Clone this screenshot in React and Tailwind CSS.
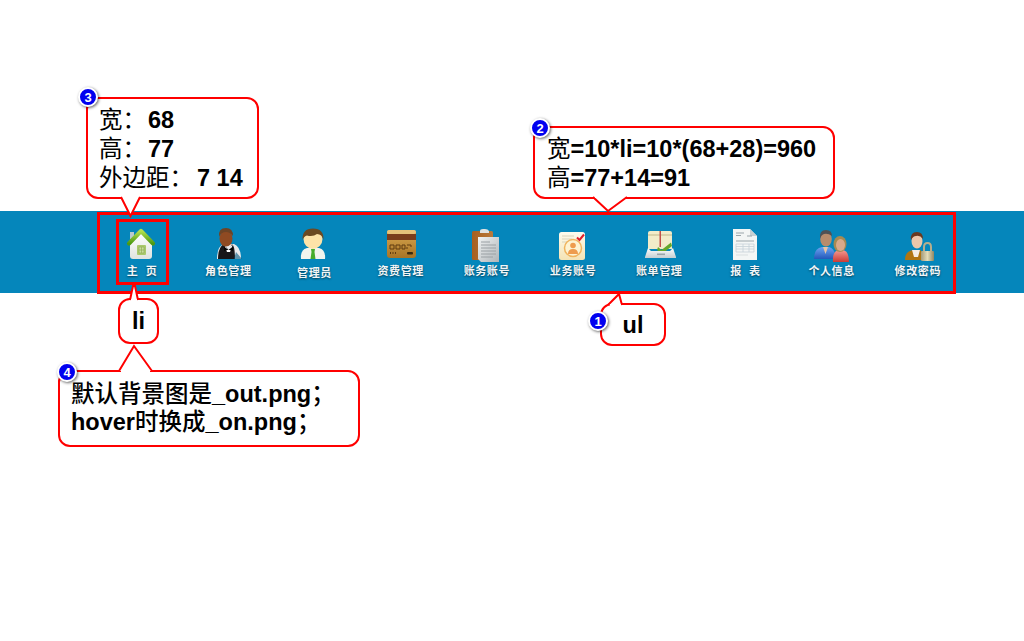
const navItems = [
  { label: "主  页", icon: HomeIcon },
  { label: "角色管理", icon: WaiterIcon },
  { label: "管理员", icon: ManagerIcon, low: true },
  { label: "资费管理", icon: CardIcon },
  { label: "账务账号", icon: ClipboardIcon },
  { label: "业务账号", icon: ProfileIcon },
  { label: "账单管理", icon: TrayIcon },
  { label: "报  表", icon: ReportIcon },
  { label: "个人信息", icon: UsersIcon },
  { label: "修改密码", icon: LockIcon },
];

function Svg({ children }) {
  return (
    <svg width="40" height="36" viewBox="0 0 40 36" className="block">
      {children}
    </svg>
  );
}

function HomeIcon() {
  return (
    <Svg>
      <defs>
        <linearGradient id="homeRoof" x1="0" y1="0" x2="0" y2="1">
          <stop offset="0" stopColor="#b4e04e" />
          <stop offset="1" stopColor="#4c9a12" />
        </linearGradient>
        <linearGradient id="homeWall" x1="0" y1="0" x2="0" y2="1">
          <stop offset="0" stopColor="#ffffff" />
          <stop offset="1" stopColor="#dfe3de" />
        </linearGradient>
      </defs>
      <rect x="8" y="5" width="4" height="7" fill="#b9c9cf" />
      <path d="M8 16L19 6L30 16V29Q30 32 27 32H11Q8 32 8 29Z" fill="url(#homeWall)" />
      <path d="M7 16.5L19 4L31 16.5" fill="none" stroke="url(#homeRoof)" strokeWidth="4.2" strokeLinecap="round" strokeLinejoin="round" />
      <rect x="15" y="18" width="9" height="10" rx="1" fill="#a9c96c" />
      <path d="M17 20h5v6h-5zM19.5 20v6M17 23h5" fill="#c9dd9d" stroke="#8fae55" strokeWidth="0.7" />
    </Svg>
  );
}

function WaiterIcon() {
  return (
    <Svg>
      <path d="M9 32Q9 19 16 17H26Q33 20 33 32Z" fill="#e8eaec" />
      <path d="M10 32Q10 20 16 17L21 24L24 17Q27 19 27 32Z" fill="#17171a" />
      <path d="M16 17L20 23L25 17L22 25H19Z" fill="#ffffff" />
      <path d="M16 20L20.5 22.5L25 20V24L20.5 22.5L16 24Z" fill="#050505" />
      <ellipse cx="18" cy="11.5" rx="6.5" ry="8" fill="#8f4a22" />
      <path d="M11 10Q10 1 18 1Q25 1 25 9Q22 5 18 5Q13 5 11 10Z" fill="#6e4425" />
      <path d="M26 32L34 32L28 25Z" fill="#04597f" opacity="0.6" />
    </Svg>
  );
}

function ManagerIcon() {
  return (
    <Svg>
      <path d="M7 32Q6 23 13 21H25Q32 23 31 32Z" fill="#f2f5ee" />
      <path d="M17 22H21L20.5 25L21.5 32H16.5L17.5 25Z" fill="#46ad2c" />
      <ellipse cx="19" cy="12" rx="9.5" ry="10" fill="#fde3a8" />
      <path d="M8.5 13Q8 1.5 19 1.5Q30 1.5 29.5 13Q28 7 23 7Q19 10 13 8.5Q10 9 8.5 13Z" fill="#6b4a22" />
    </Svg>
  );
}

function CardIcon() {
  return (
    <Svg>
      <defs>
        <linearGradient id="cardBody" x1="0" y1="0" x2="0" y2="1">
          <stop offset="0" stopColor="#d9a850" />
          <stop offset="1" stopColor="#a87426" />
        </linearGradient>
      </defs>
      <rect x="6" y="3" width="29" height="28" rx="3" fill="url(#cardBody)" />
      <rect x="6" y="3" width="29" height="4" rx="2" fill="#e6c27a" />
      <rect x="6" y="7" width="29" height="6" fill="#7b3d1c" />
      <path d="M9 18h4v4h-4zM15 18h4v4h-4zM21 18h3v4h-3zM26 18h4v2M26 20v2" fill="none" stroke="#5e3a10" strokeWidth="1" />
      <path d="M9 26h1M11.5 26h1M14 26h1" stroke="#5e3a10" strokeWidth="2" />
      <rect x="26" y="25" width="6" height="2.5" rx="1" fill="#3a2a10" />
    </Svg>
  );
}

function ClipboardIcon() {
  return (
    <Svg>
      <defs>
        <linearGradient id="clipBoard" x1="0" y1="0" x2="1" y2="0">
          <stop offset="0" stopColor="#a75f20" />
          <stop offset="1" stopColor="#b97a3c" />
        </linearGradient>
        <linearGradient id="clipPaper" x1="0" y1="0" x2="1" y2="1">
          <stop offset="0" stopColor="#f1f3f3" />
          <stop offset="1" stopColor="#aeb4b8" />
        </linearGradient>
      </defs>
      <rect x="5" y="4" width="21" height="29" rx="1.5" fill="url(#clipBoard)" />
      <path d="M13 4Q13 2 16 2H18Q21 2 22 4V6H13Z" fill="#dfe2e2" />
      <path d="M11 10H32V35H14L11 32Z" fill="url(#clipPaper)" />
      <path d="M14 15h9M14 18h15M14 21h15M14 24h15M14 27h15M14 30h12" stroke="#9aa0a4" strokeWidth="1" />
    </Svg>
  );
}

function ProfileIcon() {
  return (
    <Svg>
      <defs>
        <linearGradient id="profileCard" x1="0" y1="0" x2="0" y2="1">
          <stop offset="0" stopColor="#fdfbee" />
          <stop offset="1" stopColor="#f4e3b4" />
        </linearGradient>
      </defs>
      <rect x="6" y="5" width="26" height="28" rx="2.5" fill="url(#profileCard)" />
      <path d="M9 9h12M9 12h10M9 15h7" stroke="#d9d4bd" strokeWidth="1" />
      <circle cx="20" cy="21" r="8.5" fill="#fdf3d2" stroke="#f0b45e" strokeWidth="1.5" />
      <circle cx="20" cy="18.5" r="2.8" fill="#ee9c4e" />
      <path d="M15 27Q15 22 20 22Q25 22 25 27Z" fill="#ee9c4e" />
      <path d="M24 10.5L26.5 13L31 7.5" fill="none" stroke="#e0202c" strokeWidth="2" />
    </Svg>
  );
}

function TrayIcon() {
  return (
    <Svg>
      <defs>
        <linearGradient id="trayFront" x1="0" y1="0" x2="0" y2="1">
          <stop offset="0" stopColor="#ffffff" />
          <stop offset="1" stopColor="#c5ced2" />
        </linearGradient>
      </defs>
      <path d="M9 6Q9 4 11 4H31Q33 4 33 6V22H9Z" fill="#f2ecc9" />
      <path d="M9 7H33V9H9Z" fill="#d9d2a9" />
      <rect x="20.5" y="4" width="1.5" height="16" fill="#c2504a" />
      <path d="M19 20L22.5 23L32 15.5L33 19L23 27L18 23Z" fill="#65a82a" />
      <path d="M9 21L6 30V31H37V30L34 21L31 24H12Z" fill="url(#trayFront)" />
      <rect x="18" y="26.5" width="8" height="1.6" fill="#9aa5aa" />
    </Svg>
  );
}

function ReportIcon() {
  return (
    <Svg>
      <path d="M8 2H25L32 9V33H8Z" fill="#f3f6f5" />
      <path d="M25 2V9H32Z" fill="#c7d0d2" />
      <path d="M11 6h8M11 8.5h5M22 9h5M11 14h18" stroke="#9ba6ab" strokeWidth="1" />
      <path d="M11 17h18v8H11zM11 19.5h18M11 22h18M18 17v8M24 17v8" fill="none" stroke="#c5d2d8" strokeWidth="0.8" />
      <path d="M11 28h12" stroke="#d9dfe0" strokeWidth="1" />
    </Svg>
  );
}

function UsersIcon() {
  return (
    <Svg>
      <defs>
        <linearGradient id="usersBlue" x1="0" y1="0" x2="0" y2="1">
          <stop offset="0" stopColor="#6aa4f2" />
          <stop offset="1" stopColor="#2458ba" />
        </linearGradient>
        <linearGradient id="usersRed" x1="0" y1="0" x2="0" y2="1">
          <stop offset="0" stopColor="#f59a92" />
          <stop offset="1" stopColor="#c93b36" />
        </linearGradient>
      </defs>
      <path d="M2 32Q2 21 10 20H17Q23 21 24 32Z" fill="url(#usersBlue)" />
      <path d="M11 20H16L13.5 27Z" fill="#e8c5a5" />
      <ellipse cx="14" cy="12" rx="5.8" ry="7.5" fill="#b88c6c" />
      <path d="M8 12Q7 3 14 3Q20 3 20 9Q16 6 12 7Q9 8 8 12Z" fill="#4f5155" />
      <path d="M21 35Q20 24 27 23H31Q37 24 37 35Z" fill="url(#usersRed)" />
      <ellipse cx="28" cy="17" rx="6.5" ry="8" fill="#a68a52" />
      <ellipse cx="28.5" cy="18" rx="4.5" ry="6" fill="#d8a98a" />
    </Svg>
  );
}

function LockIcon() {
  return (
    <Svg>
      <defs>
        <linearGradient id="lockBody" x1="0" y1="0" x2="1" y2="0">
          <stop offset="0" stopColor="#a49c7c" />
          <stop offset="0.5" stopColor="#e4dcb8" />
          <stop offset="1" stopColor="#8e8662" />
        </linearGradient>
      </defs>
      <path d="M7 33Q7 24 15 23H22Q26 25 26 33Z" fill="#b07510" />
      <path d="M14 23H22L20 30H16Z" fill="#f4ede2" />
      <ellipse cx="19" cy="14" rx="5.5" ry="7.5" fill="#edc7aa" />
      <path d="M13 13Q12 5 19 5Q25 5 25 12Q22 8 18 9Q15 9 13 13Z" fill="#6a3a20" />
      <path d="M26 25V20Q26 16 29.5 16Q33 16 33 20V25" fill="none" stroke="#b5ad8c" strokeWidth="2" />
      <rect x="23" y="24" width="13" height="10" rx="1" fill="url(#lockBody)" />
    </Svg>
  );
}

function Badge({ n, className }) {
  return (
    <div className={`absolute flex h-[20px] w-[20px] items-center justify-center rounded-full border-2 border-white bg-[#0000f0] text-[13px] font-bold leading-none text-white shadow-[1px_1px_3px_rgba(0,0,0,0.6)] ${className}`}>
      {n}
    </div>
  );
}

const zh = "font-normal";

export default function App() {
  return (
    <div className="relative h-[641px] w-[1024px] overflow-hidden bg-white font-['Liberation_Sans','Noto_Sans_CJK_SC',sans-serif]">
      <div className="pt-[211px]">
        <div className="h-[82px] bg-[#0586bb] pt-px">
          <ul className="ml-[97px] flex h-[82px] w-[859px] border-[3px] border-[#ff0000]">
            {navItems.map(({ label, icon: Icon, low }, i) => (
              <li key={label} className={`flex w-[86.2px] shrink-0 flex-col items-center pt-[12px] ${i === 0 ? "-ml-px" : ""}`}>
                <Icon />
                <span className={`whitespace-pre text-[11px] font-bold leading-[14px] tracking-[0.6px] text-[#f2f6f8] [text-shadow:0_1px_2px_rgba(0,0,0,0.55)] ${low ? "mt-[3px]" : "mt-px"}`}>
                  {label}
                </span>
              </li>
            ))}
          </ul>
        </div>
      </div>

      {/* li highlight */}
      <div className="absolute left-[116px] top-[219px] h-[66px] w-[53px] border-[3px] border-[#ff0000]" />

      {/* callout 3 */}
      <div className="absolute left-[86px] top-[97px] h-[102px] w-[173px] rounded-[12px] border-2 border-[#ff0000] bg-white pl-[11px] pt-[7px] text-[23.5px] font-bold leading-[29px] text-black">
        <div><span className={zh}>宽：</span><span className="ml-[2px]">68</span></div>
        <div><span className={zh}>高：</span><span className="ml-[2px]">77</span></div>
        <div><span className={zh}>外边距：</span><span className="ml-[4px]">7 14</span></div>
      </div>
      <svg className="absolute left-[115px] top-[195px]" width="32" height="24">
        <path d="M6 2L15.5 21L25 2" fill="white" stroke="#ff0000" strokeWidth="2" />
        <path d="M8 1H23V3H8Z" fill="white" />
      </svg>
      <Badge n="3" className="left-[78px] top-[87px]" />

      {/* callout 2 */}
      <div className="absolute left-[533px] top-[126px] h-[73px] w-[302px] rounded-[12px] border-2 border-[#ff0000] bg-white pl-[12px] pt-[7px] text-[23.5px] font-bold leading-[29px] text-black">
        <div><span className={zh}>宽</span>=10*li=10*(68+28)=960</div>
        <div><span className={zh}>高</span>=77+14=91</div>
      </div>
      <svg className="absolute left-[588px] top-[195px]" width="44" height="19">
        <path d="M5 2L20 16L39 2" fill="white" stroke="#ff0000" strokeWidth="2" />
        <path d="M7 1H36V3H7Z" fill="white" />
      </svg>
      <Badge n="2" className="left-[530px] top-[118px]" />

      {/* callout 1 */}
      <div className="absolute left-[600px] top-[303px] flex h-[43px] w-[66px] items-center justify-center rounded-[12px] border-2 border-[#ff0000] bg-white pt-[3px] text-[23.5px] font-bold leading-none text-black">
        ul
      </div>
      <svg className="absolute left-[604px] top-[291px]" width="24" height="16">
        <path d="M4 14L15 3L18 14" fill="white" stroke="#ff0000" strokeWidth="2" />
        <path d="M6 13H17V15H6Z" fill="white" />
      </svg>
      <Badge n="1" className="left-[588px] top-[311px]" />

      {/* callout li */}
      <div className="absolute left-[118px] top-[298px] flex h-[46px] w-[41px] items-center justify-center rounded-[12px] border-2 border-[#ff0000] bg-white pt-[2px] text-[23.5px] font-bold leading-none text-black">
        li
      </div>
      <svg className="absolute left-[126px] top-[284px]" width="16" height="17">
        <path d="M4 16L7 2L9 2L12 16" fill="white" stroke="#ff0000" strokeWidth="2" />
        <path d="M5 15H11V17H5Z" fill="white" />
      </svg>

      {/* callout 4 */}
      <div className="absolute left-[58px] top-[370px] h-[77px] w-[302px] rounded-[12px] border-2 border-[#ff0000] bg-white pl-[11px] pt-[8px] text-[23.5px] font-bold leading-[28px] text-black">
        <div><span className="font-medium">默认背景图是</span>_out.png<span className="font-medium">；</span></div>
        <div>hover<span className="font-medium">时换成</span>_on.png<span className="font-medium">；</span></div>
      </div>
      <svg className="absolute left-[114px] top-[343px]" width="44" height="30">
        <path d="M5 28L20 3L38 28" fill="white" stroke="#ff0000" strokeWidth="2" />
        <path d="M7 27H36V29H7Z" fill="white" />
      </svg>
      <Badge n="4" className="left-[57px] top-[362px]" />
    </div>
  );
}
